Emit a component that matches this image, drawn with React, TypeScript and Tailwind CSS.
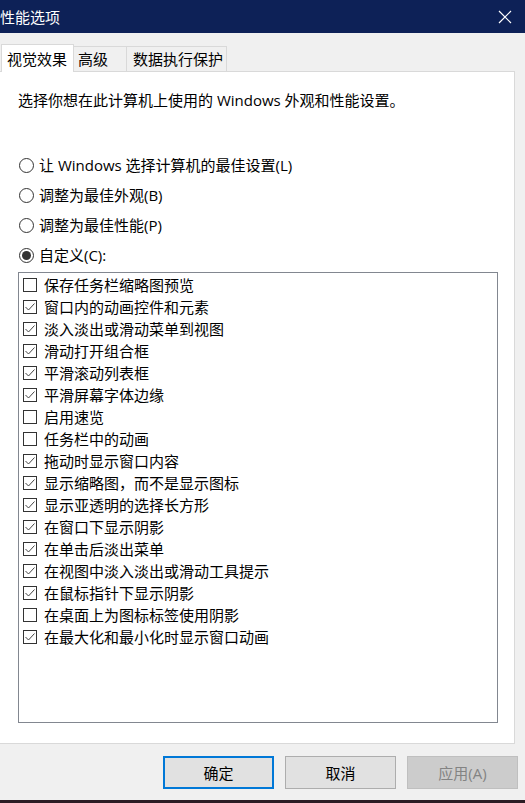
import React from 'react';

const options: { label: string; checked: boolean }[] = [
  { label: '保存任务栏缩略图预览', checked: false },
  { label: '窗口内的动画控件和元素', checked: true },
  { label: '淡入淡出或滑动菜单到视图', checked: true },
  { label: '滑动打开组合框', checked: true },
  { label: '平滑滚动列表框', checked: true },
  { label: '平滑屏幕字体边缘', checked: true },
  { label: '启用速览', checked: false },
  { label: '任务栏中的动画', checked: false },
  { label: '拖动时显示窗口内容', checked: true },
  { label: '显示缩略图，而不是显示图标', checked: true },
  { label: '显示亚透明的选择长方形', checked: true },
  { label: '在窗口下显示阴影', checked: true },
  { label: '在单击后淡出菜单', checked: true },
  { label: '在视图中淡入淡出或滑动工具提示', checked: true },
  { label: '在鼠标指针下显示阴影', checked: true },
  { label: '在桌面上为图标标签使用阴影', checked: false },
  { label: '在最大化和最小化时显示窗口动画', checked: true },
];

const radios = [
  { label: '让 Windows 选择计算机的最佳设置(L)', selected: false },
  { label: '调整为最佳外观(B)', selected: false },
  { label: '调整为最佳性能(P)', selected: false },
  { label: '自定义(C):', selected: true },
];

const Radio = ({ selected }: { selected: boolean }) => (
  <span className="w-[15px] h-[15px] rounded-full border border-[#333333] bg-white flex items-center justify-center shrink-0">
    {selected && <span className="w-[9px] h-[9px] rounded-full bg-[#333333]" />}
  </span>
);

const Checkbox = ({ checked }: { checked: boolean }) => (
  <span className="w-[14px] h-[14px] border border-[#333333] bg-white flex items-center justify-center shrink-0">
    {checked && (
      <svg width="12" height="12" viewBox="0 0 12 12">
        <polyline points="1.5,6 4.5,9 10.5,2.5" fill="none" stroke="#444444" strokeWidth="1" />
      </svg>
    )}
  </span>
);

export default function App() {
  return (
    <div
      className="w-[525px] h-[803px] bg-[#f0f0f0] flex flex-col overflow-hidden text-black text-[15px]"
      style={{ fontFamily: '"Open Sans", "Noto Sans CJK SC", sans-serif' }}
    >
      {/* title bar */}
      <div className="h-[33px] bg-[#0d2157] flex items-center justify-between shrink-0">
        <span className="text-white text-[15px] leading-[20px]">性能选项</span>
        <svg width="14" height="14" viewBox="0 0 14 14" className="mr-[13px]">
          <path d="M1 1 L13 13 M13 1 L1 13" stroke="#ffffff" strokeWidth="1.2" />
        </svg>
      </div>

      {/* tabs */}
      <div className="flex items-end pt-[11px] pl-[1px] shrink-0 relative z-10">
        <div className="w-[73px] h-[28px] bg-white border border-[#d9d9d9] border-b-0 -mb-px flex items-center pl-[5px] leading-[20px]">
          视觉效果
        </div>
        <div className="w-[53px] h-[25px] bg-[#f0f0f0] border border-[#d9d9d9] border-l-0 border-b-0 flex items-center pl-[4px] leading-[20px]">
          高级
        </div>
        <div className="w-[100px] h-[25px] bg-[#f0f0f0] border border-[#d9d9d9] border-l-0 border-b-0 flex items-center pl-[6px] leading-[20px]">
          数据执行保护
        </div>
      </div>

      {/* panel */}
      <div className="-ml-px w-[516px] h-[673px] bg-white border border-[#d9d9d9] shrink-0 flex flex-col pl-[18px]">
        <p className="mt-[18px] leading-[20px]">选择你想在此计算机上使用的 Windows 外观和性能设置。</p>

        <div className="mt-[40px] flex flex-col">
          {radios.map((r) => (
            <div key={r.label} className="h-[30px] flex items-center gap-[5px] pl-[1px]">
              <Radio selected={r.selected} />
              <span className="leading-[20px]">{r.label}</span>
            </div>
          ))}
        </div>

        <div className="mt-[2px] w-[480px] h-[451px] border border-[#828790] flex flex-col pt-[1px]">
          {options.map((o) => (
            <div key={o.label} className="h-[22px] flex items-center gap-[7px] pl-[4px]">
              <Checkbox checked={o.checked} />
              <span className="leading-[20px] whitespace-nowrap">{o.label}</span>
            </div>
          ))}
        </div>
      </div>

      {/* buttons */}
      <div className="flex gap-[11px] pl-[163px] mt-[12px] shrink-0">
        <button className="w-[111px] h-[33px] bg-[#e1e1e1] border-2 border-[#0078d7] leading-[20px]">确定</button>
        <button className="w-[111px] h-[33px] bg-[#e1e1e1] border border-[#adadad] leading-[20px]">取消</button>
        <button className="w-[111px] h-[33px] bg-[#cccccc] border border-[#bfbfbf] text-[#838383] leading-[20px]">
          应用(A)
        </button>
      </div>

      <div className="mt-auto h-[3px] bg-[#2b1c24] shrink-0" />
    </div>
  );
}
